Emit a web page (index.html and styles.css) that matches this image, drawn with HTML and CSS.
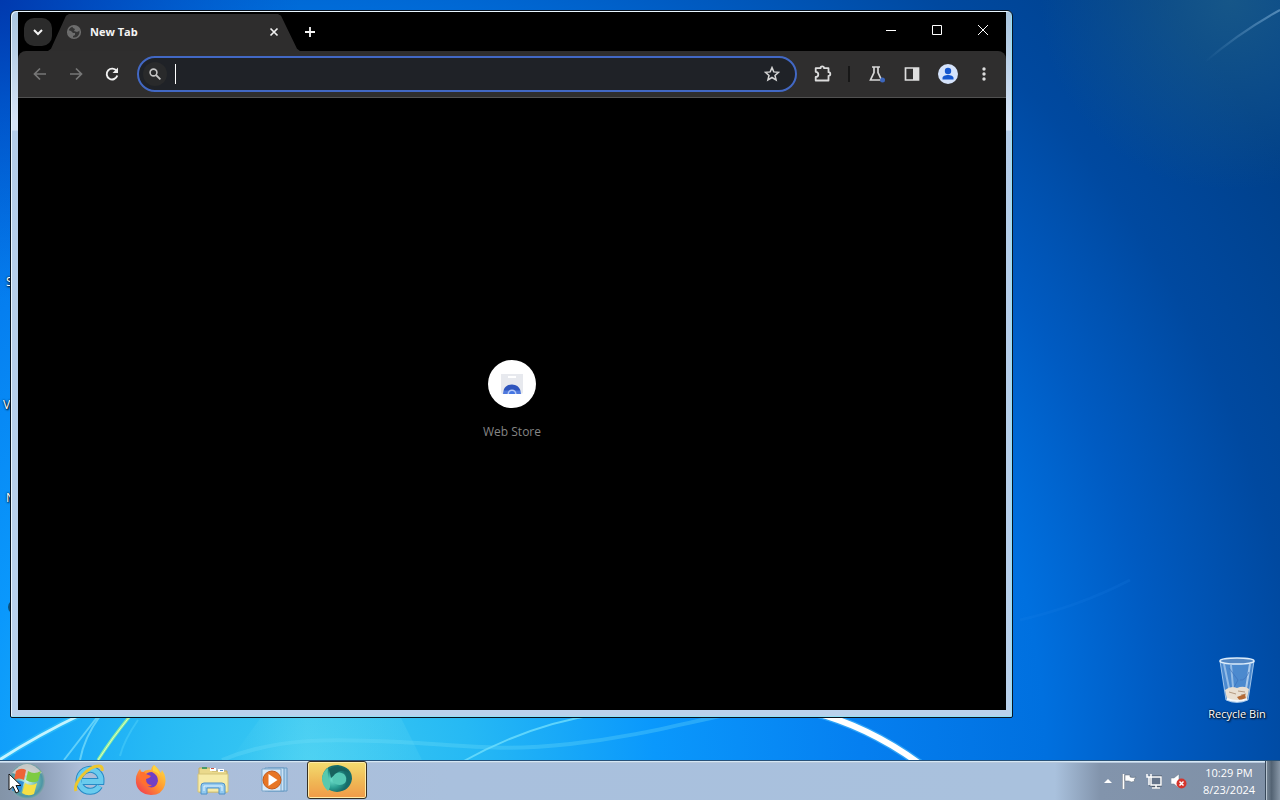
FILE: index.html
```html
<!doctype html>
<html lang="en">

<head>
    <meta charset="utf-8">
    <title>New Tab</title>
    <link rel="stylesheet" href="styles.css">
</head>

<body>
    <svg class="wallpaper" viewBox="0 0 1280 800" preserveAspectRatio="none">
        <defs>
            <radialGradient id="sky" gradientUnits="userSpaceOnUse" cx="310" cy="770" r="1150">
                <stop offset="0" stop-color="#3ccbf1" />
                <stop offset="0.14" stop-color="#26b9f4" />
                <stop offset="0.3" stop-color="#0a98fc" />
                <stop offset="0.48" stop-color="#057ff0" />
                <stop offset="0.64" stop-color="#0070df" />
                <stop offset="0.74" stop-color="#005bc2" />
                <stop offset="0.86" stop-color="#0049a0" />
                <stop offset="1" stop-color="#00408a" />
            </radialGradient>
            <radialGradient id="haze" gradientUnits="userSpaceOnUse" cx="1230" cy="0" r="190">
                <stop offset="0" stop-color="#2c6c86" stop-opacity="0.5" />
                <stop offset="1" stop-color="#2c6c86" stop-opacity="0" />
            </radialGradient>
            <radialGradient id="corner" gradientUnits="userSpaceOnUse" cx="0" cy="0" r="300">
                <stop offset="0" stop-color="#0030a8" stop-opacity="0.8" />
                <stop offset="1" stop-color="#0048c8" stop-opacity="0" />
            </radialGradient>
            <linearGradient id="streak" x1="0" y1="1" x2="1" y2="0">
                <stop offset="0" stop-color="#7fb0d8" stop-opacity="0" />
                <stop offset="1" stop-color="#7fb0d8" stop-opacity="0.6" />
            </linearGradient>
            <linearGradient id="ray">
                <stop offset="0" stop-color="#7be4f4" stop-opacity="0" />
                <stop offset="0.4" stop-color="#7be4f4" stop-opacity="0.3" />
                <stop offset="1" stop-color="#7be4f4" stop-opacity="0.12" />
            </linearGradient>
        </defs>
        <rect width="1280" height="800" fill="url(#sky)" />
        <rect width="1280" height="800" fill="url(#haze)" />
        <rect width="1280" height="800" fill="url(#corner)" />
        <path d="M1205 62Q1240 32 1280 10" stroke="url(#streak)" stroke-width="2" fill="none" />
        <path d="M1020 620Q1080 606 1130 580" stroke="#1f84ec" stroke-opacity="0.15" stroke-width="3" fill="none" />
        <path d="M-4 762Q36 736 82 714" stroke="#35c4f8" stroke-width="6" stroke-opacity="0.6" fill="none" />
        <path d="M-4 762Q36 736 82 714" stroke="#c5f4ff" stroke-width="3" fill="none" />
        <path d="M64 760L98 716M80 760Q84 738 100 716" stroke="#7de0fb" stroke-opacity="0.7" stroke-width="2" fill="none" />
        <path d="M98 760Q112 738 130 716" stroke="#8df0a0" stroke-width="3" fill="none" />
        <path d="M98 760Q112 738 130 716" stroke="#dffbc0" stroke-width="1" fill="none" />
        <path d="M120 756Q124 740 138 720" stroke="#5ad6fa" stroke-opacity="0.4" stroke-width="2" fill="none" />
        <path d="M230 760L262 716H400L422 760Z" fill="url(#ray)" />
        <path d="M222 760C280 736 340 739 400 742S500 752 570 744S680 724 730 714" stroke="#70ddf8" stroke-opacity="0.3" stroke-width="4" fill="none" />
        <path d="M462 762Q530 724 600 714" stroke="#6fdefc" stroke-opacity="0.8" stroke-width="2" fill="none" />
        <path d="M812 712Q868 726 920 764" stroke="#58c8ff" stroke-width="9" stroke-opacity="0.5" fill="none" />
        <path d="M812 712Q868 726 920 764" stroke="#fff" stroke-width="6" fill="none" />
    </svg>

    <main class="desktop">
        <span class="shortcut shortcut-s">S</span>
        <span class="shortcut shortcut-v">V</span>
        <span class="shortcut shortcut-n">N</span>
        <span class="shortcut-orb"></span>

        <div class="recycle">
            <svg width="40" height="48" viewBox="0 0 40 48">
                <path d="M3 5L9 44Q20 49 31 44L37 5Z" fill="#7fb0e4" fill-opacity="0.6" stroke="#bcd8f4" stroke-opacity="0.8" />
                <path d="M7 8L12 32M14 9L16 31" stroke="#d9ebfb" stroke-opacity="0.5" stroke-width="2" />
                <path d="M33 8L29 33" stroke="#e8f4ff" stroke-opacity="0.6" stroke-width="2" />
                <path d="M12 12L21 24L16 33M32 16Q28 25 23 24" stroke="#3e72ba" stroke-opacity="0.7" fill="none" />
                <path d="M8 34Q14 29 20 32Q27 29 32 33L30 43Q20 47 10 43Z" fill="#e9dfd2" />
                <path d="M12 36L19 38M21 35L28 36M24 39L29 38" stroke="#b49a82" />
                <path d="M20 41L28 38L29 43L23 45Z" fill="#b56a35" />
                <path d="M10 43Q20 47 30 43" stroke="#f4f8fc" stroke-width="2" fill="none" />
                <ellipse cx="20" cy="5" rx="17" ry="3" fill="#5588c4" stroke="#dcecfa" stroke-width="1.5" />
            </svg>
            <span>Recycle Bin</span>
        </div>

        <section class="window">
            <div class="browser">
                <div class="tabstrip">
                    <button class="tab-search" type="button" aria-label="Search tabs">
                        <svg width="12" height="12" viewBox="0 0 12 12"><path d="M2 4l4 4 4-4" fill="none" stroke="#f4f4f4" stroke-width="2" /></svg>
                    </button>
                    <div class="tab">
                        <svg width="16" height="16" viewBox="0 0 16 16">
                            <circle cx="8" cy="8" r="6.3" fill="#343434" stroke="#6d6d6d" stroke-width="1.6" />
                            <path d="M2 6l3 1 2 2h2v2l-2 1v2c-3 0-5-3-5-6zM6 2l1 2 2 1-1 2 3 1 2-1 1-1c-1-3-4-5-8-4z" fill="#6d6d6d" />
                        </svg>
                        <span class="tab-title">New Tab</span>
                        <button class="tab-close" type="button" aria-label="Close tab">
                            <svg width="10" height="10" viewBox="0 0 10 10"><path d="M1.5 1.5l7 7M8.5 1.5l-7 7" stroke="#f0f0f0" stroke-width="1.7" /></svg>
                        </button>
                    </div>
                    <button class="new-tab" type="button" aria-label="New tab">
                        <svg width="12" height="12" viewBox="0 0 12 12"><path d="M6 1v10M1 6h10" stroke="#f4f4f4" stroke-width="1.8" /></svg>
                    </button>
                    <div class="caption">
                        <button type="button" aria-label="Minimize"><svg width="10" height="10" viewBox="0 0 10 10"><path d="M0 5.5h10" stroke="#fff" /></svg></button>
                        <button type="button" aria-label="Maximize"><svg width="10" height="10" viewBox="0 0 10 10"><path d="M.5.5h9v9h-9z" fill="none" stroke="#fff" /></svg></button>
                        <button type="button" aria-label="Close"><svg width="10" height="10" viewBox="0 0 10 10"><path d="M0 0l10 10M10 0L0 10" stroke="#fff" /></svg></button>
                    </div>
                </div>

                <div class="toolbar">
                    <button class="tool" type="button" aria-label="Back">
                        <svg width="16" height="16" viewBox="0 0 16 16"><path d="M14 8H3M8 2.5L2.5 8 8 13.5" fill="none" stroke="#777" stroke-width="1.7" /></svg>
                    </button>
                    <button class="tool" type="button" aria-label="Forward">
                        <svg width="16" height="16" viewBox="0 0 16 16"><path d="M2 8h11M8 2.5L13.5 8 8 13.5" fill="none" stroke="#777" stroke-width="1.7" /></svg>
                    </button>
                    <button class="tool" type="button" aria-label="Reload">
                        <svg width="16" height="16" viewBox="0 0 16 16"><path d="M12.6 5A5.4 5.4 0 1 0 13.3 9.5" fill="none" stroke="#f0f0f0" stroke-width="1.9" /><path d="M14 1.5V7H8.5z" fill="#f0f0f0" /></svg>
                    </button>
                    <div class="omnibox">
                        <span class="search-icon">
                            <svg width="12" height="12" viewBox="0 0 12 12"><circle cx="4.5" cy="4.5" r="3.4" fill="none" stroke="#c4c4c4" stroke-width="1.6" /><path d="M7 7l4.4 4.4" stroke="#c4c4c4" stroke-width="1.8" /></svg>
                        </span>
                        <span class="caret"></span>
                        <input type="text" aria-label="Address and search bar">
                        <button class="star" type="button" aria-label="Bookmark this tab">
                            <svg width="16" height="16" viewBox="0 0 16 16"><path d="M8 1.6l1.8 4.3 4.7.4L11 9.4l1.1 4.6L8 11.5 3.9 14 5 9.4 1.500 6.300l4.700-.4z" fill="none" stroke="#d4d4d4" stroke-width="1.5" /></svg>
                        </button>
                    </div>
                    <button class="tool" type="button" aria-label="Extensions">
                        <svg width="18" height="18" viewBox="0 0 18 18"><path d="M1.700 3.200H6.500a1.800 1.800 0 0 1 3.600 0H14.500V7.200a1.800 1.800 0 0 1 0 3.600V15.500H1.700V12a2.600 2.600 0 0 0 0-5.200z" fill="none" stroke="#dcdcdc" stroke-width="1.8" stroke-linejoin="round" /></svg>
                    </button>
                    <span class="divider"></span>
                    <button class="tool" type="button" aria-label="Labs">
                        <svg width="18" height="18" viewBox="0 0 18 18"><path d="M5 2h8M7 2v5.500L3.500 15h11L11 7.500V2" fill="none" stroke="#d8d8d8" stroke-width="1.7" /><circle cx="15.500" cy="15" r="2.500" fill="#3c66bd" /></svg>
                    </button>
                    <button class="tool" type="button" aria-label="Side panel">
                        <svg width="16" height="16" viewBox="0 0 16 16"><path d="M1.500 2h13v12h-13z" fill="none" stroke="#dedede" stroke-width="1.7" /><path d="M9 2h5v12H9z" fill="#dedede" /></svg>
                    </button>
                    <button class="tool" type="button" aria-label="Profile">
                        <svg width="20" height="20" viewBox="0 0 20 20"><circle cx="10" cy="10" r="10" fill="#d5e3fb" /><circle cx="10" cy="7" r="3.2" fill="#1557ce" /><path d="M4.5 15.5v-1.500c0-4 11-4 11 0v1.500z" fill="#1557ce" /></svg>
                    </button>
                    <button class="tool" type="button" aria-label="Menu">
                        <svg width="16" height="16" viewBox="0 0 16 16" fill="#dcdcdc"><circle cx="8" cy="3" r="1.7" /><circle cx="8" cy="8" r="1.7" /><circle cx="8" cy="13" r="1.7" /></svg>
                    </button>
                </div>

                <div class="page">
                    <a class="tile" href="#">
                        <span class="tile-icon">
                            <svg width="24" height="24" viewBox="0 0 24 24">
                                <path d="M1 2h22v18q0 2-2 2H3q-2 0-2-2z" fill="#e7e9ee" />
                                <path d="M8 4h8v2H8z" fill="#fff" />
                                <path d="M3 22a9 9 0 0 1 18 0z" fill="#4f78dc" />
                                <path d="M3.500 18.500a9 9 0 0 1 17 0h-8z" fill="#2f55bd" />
                                <path d="M7.500 22a4.500 4.500 0 0 1 9 0z" fill="#b4c9f8" />
                                <path d="M9 22a3 3 0 0 1 6 0z" fill="#4576e4" />
                            </svg>
                        </span>
                        <span>Web Store</span>
                    </a>
                </div>
            </div>
        </section>
    </main>

    <footer class="taskbar">
        <button class="start" type="button" aria-label="Start">
            <svg width="40" height="38" viewBox="0 0 40 38">
                <defs>
                    <radialGradient id="orb"><stop offset="0" stop-color="#d2f4f0" /><stop offset="0.5" stop-color="#72bdb8" /><stop offset="0.85" stop-color="#4c96a4" /><stop offset="1" stop-color="#8aa5ad" /></radialGradient>
                </defs>
                <circle cx="20" cy="19" r="18" fill="url(#orb)" />
                <path d="M5 11Q20-7 35 11Q20 16 5 11" fill="#ecd9d4" fill-opacity="0.75" />
                <path d="M9 9q5-4 10-1l-2 10q-5-3-10 0z" fill="#ee6336" />
                <path d="M21 9q6 4 13 0l-3 10q-6 3-12-1z" fill="#7ecb42" />
                <path d="M7 20q4-3 10 0l-3 10q-4-3-9-1z" fill="#318fd8" />
                <path d="M18 21q6 4 12 0l-3 11q-6 3-12-1z" fill="#f5e046" />
            </svg>
        </button>
        <nav class="pinned">
            <button class="app" type="button" aria-label="Internet Explorer">
                <svg width="34" height="34" viewBox="0 0 34 34">
                    <path d="M27.500 23A11 11 0 1 1 29 18.500H10" fill="none" stroke="#278ac6" stroke-width="7" />
                    <path d="M27.500 23A11 11 0 1 1 29 18.500H10" fill="none" stroke="#69cbee" stroke-width="5" />
                    <path d="M4 28C1 20 16 3 27 3q4 0 3 5" fill="none" stroke="#edc72e" stroke-width="3" />
                </svg>
            </button>
            <button class="app" type="button" aria-label="Firefox">
                <svg width="34" height="34" viewBox="0 0 34 34">
                    <defs><linearGradient id="fox" x1="1" y1="0" x2="0" y2="1"><stop offset="0" stop-color="#ffe543" /><stop offset="0.5" stop-color="#ff9130" /><stop offset="1" stop-color="#ef2c55" /></linearGradient></defs>
                    <path d="M20 2Q25 6 27 10L28 7Q33 14 31 22Q28 32 17 32Q4 31 2 20Q1 12 6 6L8 10Q12 6 17 7Q17 4 20 2Z" fill="url(#fox)" />
                    <path d="M10 14Q12 9 18 9Q24 12 24 18Q22 26 15 24Q9 21 10 14Z" fill="#7140c5" />
                    <path d="M6 9Q10 8 12 11L17 13Q15 16 12 16Q12 22 18 22Q13 26 8 20Q5 15 6 9Z" fill="#ff702f" />
                    <path d="M20 2Q25 6 26 13Q24 9 19 8Q18 5 20 2Z" fill="#ffd43e" />
                </svg>
            </button>
            <button class="app" type="button" aria-label="Windows Explorer">
                <svg width="34" height="34" viewBox="0 0 34 34">
                    <path d="M3 5h11l2 3h15v21H3z" fill="#ead98c" stroke="#c4ad62" />
                    <path d="M6 4h5v2H6z" fill="#4a9c66" /><path d="M14 5h6v3h-6z" fill="#fff" /><path d="M15 5h3v1h-3z" fill="#cf5141" /><path d="M22 6h6v3h-6z" fill="#fff" /><path d="M24 7h3v1h-3z" fill="#538cc9" />
                    <path d="M2 11h30v18H2z" fill="#f6eba8" stroke="#d5c478" />
                    <path d="M5 31V23q0-3 3-3h18q3 0 3 3v8h-6v-6H11v6z" fill="#92c9ee" stroke="#4c91ca" />
                    <path d="M8 28v-5h18v5" fill="none" stroke="#e0f4ff" />
                </svg>
            </button>
            <button class="app" type="button" aria-label="Media Player">
                <svg width="34" height="34" viewBox="0 0 34 34">
                    <path d="M10 5h19v23H10z" fill="#aed0ed" stroke="#6699c2" /><path d="M7 5h19v23H7z" fill="#c9e2f6" stroke="#6699c2" /><path d="M4 6h19v22H4z" fill="#d8eaf8" stroke="#78a5ca" />
                    <circle cx="14" cy="17" r="9" fill="#e77524" stroke="#c4591a" /><path d="M10.500 11l9 6-9 6z" fill="#fff" />
                </svg>
            </button>
            <button class="app active" type="button" aria-label="Browser">
                <svg width="34" height="30" viewBox="0 0 34 30">
                    <defs><radialGradient id="globe" cx="0.35" cy="0.55"><stop offset="0" stop-color="#6fe0cc" /><stop offset="0.6" stop-color="#2a9e91" /><stop offset="1" stop-color="#176c6a" /></radialGradient></defs>
                    <path d="M2 14Q4 1 18 1Q32 3 32 15Q30 27 17 28Q4 27 2 14Z" fill="url(#globe)" />
                    <path d="M9 5Q15 1 23 4Q28 6 29 9Q24 5 18 8L11 14Z" fill="#17625e" />
                    <path d="M2 14Q3 7 8 4Q7 12 10 18Q11 23 8 27Q2 22 2 14Z" fill="#58c9ad" />
                    <path d="M15 10Q19 7 24 10Q28 14 25 19Q20 23 14 19Q10 16 15 10Z" fill="#55c8b4" />
                </svg>
            </button>
        </nav>
        <div class="tray">
            <button type="button" aria-label="Show hidden icons"><svg width="8" height="5" viewBox="0 0 8 5"><path d="M0 5l4-4 4 4z" fill="#fff" /></svg></button>
            <button type="button" aria-label="Action Center">
                <svg width="16" height="16" viewBox="0 0 16 16"><path d="M2.500 1v15" stroke="#4c5969" stroke-width="3" /><path d="M2.500 1v15" stroke="#fff" stroke-width="2" /><path d="M4 2h5v2q3 1 6 0l-2 3 1 1q-4 2-6 0H4z" fill="#fff" stroke="#596675" stroke-width="0.500" /></svg>
            </button>
            <button type="button" aria-label="Network">
                <svg width="16" height="16" viewBox="0 0 16 16"><path d="M5 4h10v8H5zM10 12v3M6 15h8" fill="#66758a" stroke="#4c5969" stroke-width="3" /><path d="M5 4h10v8H5zM10 12v3M6 15h8" fill="#66758a" stroke="#fff" stroke-width="1.5" /><path d="M1 1v3h4V1M3 4v8" fill="none" stroke="#fff" stroke-width="1.5" /></svg>
            </button>
            <button type="button" aria-label="Volume">
                <svg width="16" height="16" viewBox="0 0 16 16"><path d="M0 5h3l5-4v14l-5-4H0z" fill="#fff" stroke="#677587" stroke-width="0.5" /><circle cx="10.500" cy="10.500" r="5" fill="#d5342c" /><path d="M8.500 8.500l4 4m0-4l-4 4" stroke="#fff" stroke-width="1.5" /></svg>
            </button>
        </div>
        <div class="clock">
            <span>10:29 PM</span>
            <span>8/23/2024</span>
        </div>
        <button class="show-desktop" type="button" aria-label="Show desktop"></button>
    </footer>

    <svg class="cursor" width="14" height="21" viewBox="0 0 14 21"><path d="M1 1v16l4-3.500 3 6.500 3-1.500-3-6h5z" fill="#fff" stroke="#111" /></svg>
</body>

</html>
```

FILE: styles.css
```css
* {
    box-sizing: border-box;
}

body,
html {
    margin: 0;
    height: 100%;
}

body {
    display: flex;
    flex-direction: column;
    position: relative;
    overflow: hidden;
    background-color: #0a6fd8;
    font-family: "Open Sans", "Noto Sans", sans-serif;
    font-size: 12px;
}

button {
    display: flex;
    align-items: center;
    justify-content: center;
    padding: 0;
    border: none;
    background: none;
    font: inherit;
    flex: none;
}

svg {
    display: block;
    flex: none;
}

.wallpaper {
    position: absolute;
    width: 100%;
    height: 100%;
}

/* desktop */
.desktop {
    flex: 1;
    position: relative;
}

.shortcut {
    position: absolute;
    color: white;
    line-height: 16px;
    text-shadow: 1px 1px 2px black, 0 0 2px black;
}

.shortcut-s {
    left: 6px;
    top: 274px;
}

.shortcut-v {
    left: 3px;
    top: 397px;
}

.shortcut-n {
    left: 6px;
    top: 490px;
}

.shortcut-orb {
    position: absolute;
    left: 8px;
    top: 600px;
    width: 14px;
    height: 14px;
    border-radius: 50%;
    background-color: #0b4d78;
}

.recycle {
    position: absolute;
    right: 8px;
    bottom: 38px;
    width: 70px;
    display: flex;
    flex-direction: column;
    align-items: center;
    color: white;
    line-height: 16px;
    gap: 2px;
    white-space: nowrap;
    font-size: 11px;
    text-shadow: 1px 1px 2px black, 0 0 2px black;
}

/* browser window */
.window {
    position: absolute;
    left: 10px;
    top: 10px;
    right: 267px;
    bottom: 42px;
    padding: 0 6px 7px 7px;
    border: 1px solid #0a1420;
    border-radius: 6px 6px 2px 2px;
    background: linear-gradient(#a9c5de, #d5e3f6 110px, #d5e3f6 119px, #b4cde9 120px, #b9d1ec);
    box-shadow: inset 1px 1px 0 #e9f6ff, inset -1px -1px 0 #8fe0f8;
}

.browser {
    display: flex;
    flex-direction: column;
    height: 100%;
    padding-top: 1px;
    background-color: black;
    background-clip: content-box;
}

.tabstrip {
    display: flex;
    align-items: center;
    height: 39px;
    padding-left: 6px;
}

.tab-search {
    width: 28px;
    height: 28px;
    border-radius: 10px;
    background-color: #2b2b2b;
}

.tab {
    align-self: flex-end;
    display: flex;
    align-items: center;
    width: 252px;
    height: 37px;
    margin: 0 -4px;
    padding: 0 16px 2px 18px;
    background-color: #2e2d2d;
    clip-path: polygon(0 100%, 3px 94%, 18px 5%, 21px 0, 230px 0, 233px 5%, 249px 94%, 252px 100%);
}

.tab-title {
    flex: 1;
    padding-left: 8px;
    color: #f4f4f4;
    font-size: 11px;
    font-weight: bold;
}

.tab-close {
    width: 20px;
    height: 20px;
}

.new-tab {
    width: 28px;
    height: 28px;
}

.caption {
    display: flex;
    align-self: stretch;
    margin-left: auto;
    padding-bottom: 3px;
}

.caption button {
    width: 46px;
}

.toolbar {
    display: flex;
    align-items: center;
    height: 47px;
    padding: 0 4px;
    border-bottom: 1px solid #515151;
    border-radius: 8px 8px 0 0;
    background-color: #2f2e2e;
}

.tool {
    width: 36px;
    height: 36px;
}

.omnibox {
    flex: 1;
    display: flex;
    align-items: center;
    height: 36px;
    margin: 0 8px 0 7px;
    padding: 0 9px 0 4px;
    border: 2px solid #4268c4;
    border-radius: 18px;
    background-color: #1f2227;
}

.search-icon {
    display: flex;
    align-items: center;
    justify-content: center;
    width: 24px;
    height: 24px;
    border-radius: 50%;
    background-color: #292a2b;
}

.caret {
    width: 1px;
    height: 20px;
    margin-left: 8px;
    background-color: white;
}

.omnibox input {
    flex: 1;
    min-width: 0;
    height: 24px;
    padding: 0;
    border: none;
    outline: none;
    background: none;
    color: white;
    font: inherit;
}

.star {
    width: 28px;
    height: 28px;
}

.divider {
    width: 2px;
    height: 16px;
    margin: 0 8px 0 7px;
    background-color: #171717;
}

.page {
    flex: 1;
    display: flex;
    align-items: center;
    justify-content: center;
}

.tile {
    display: flex;
    flex-direction: column;
    align-items: center;
    gap: 12px;
    padding-bottom: 4px;
    color: #858585;
    line-height: 24px;
    text-decoration: none;
}

.tile-icon {
    display: flex;
    align-items: center;
    justify-content: center;
    width: 48px;
    height: 48px;
    border-radius: 50%;
    background-color: white;
}

/* taskbar */
.taskbar {
    position: relative;
    display: flex;
    align-items: center;
    height: 40px;
    border-top: 1px solid #27527a;
    background: linear-gradient(90deg, #8394a8, #8d9fb8 40px, #acbdd8 80px, #a9c0dd 35%, #a9c1dd 80%, #a9c1dd calc(100% - 225px), #8294ac calc(100% - 180px), #7f90a6);
    box-shadow: inset 0 1px 0 #d5e8f6, inset 0 2px 0 #b7c8dc;
}

.start {
    width: 54px;
}

.pinned {
    display: flex;
    gap: 2px;
    padding-left: 5px;
    align-self: stretch;
}

.app {
    width: 60px;
    height: 38px;
    border-radius: 3px;
}

.app.active {
    border: 1px solid #342f24;
    box-shadow: inset 0 0 0 1px #ffecaa;
    background: linear-gradient(#f3dd70, #f0b755 55%, #f09a48);
    padding-bottom: 3px;
}

.tray {
    display: flex;
    align-items: center;
    gap: 9px;
    margin-left: auto;
}

.clock {
    display: flex;
    flex-direction: column;
    align-items: center;
    width: 54px;
    margin: 0 9px 0 15px;
    color: white;
    font-size: 11px;
    line-height: 17px;
}

.show-desktop {
    width: 15px;
    height: 39px;
    border-left: 1px solid #38485a;
    background: linear-gradient(90deg, #7b8a9a, #536373 40%, #8796a6);
    box-shadow: inset 1px 0 0 #b7c4d0;
}

.cursor {
    position: absolute;
    left: 8px;
    bottom: 6px;
}
```
